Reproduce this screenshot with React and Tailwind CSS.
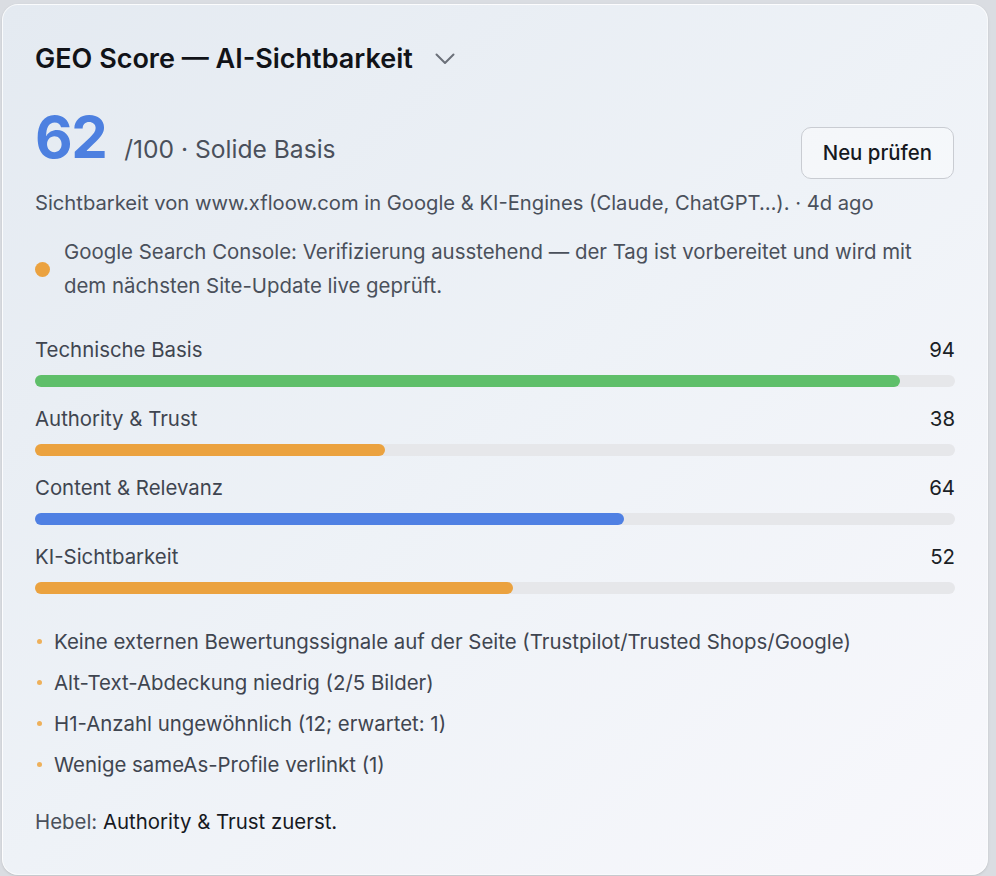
const pillars = [
  { label: 'Technische Basis', value: 94, color: 'bg-[#5fbf6a]' },
  { label: 'Authority & Trust', value: 38, color: 'bg-[#eba23f]' },
  { label: 'Content & Relevanz', value: 64, color: 'bg-[#4f80e3]' },
  { label: 'KI-Sichtbarkeit', value: 52, color: 'bg-[#eba23f]' },
]

const findings = [
  'Keine externen Bewertungssignale auf der Seite (Trustpilot/Trusted Shops/Google)',
  'Alt-Text-Abdeckung niedrig (2/5 Bilder)',
  'H1-Anzahl ungewöhnlich (12; erwartet: 1)',
  'Wenige sameAs-Profile verlinkt (1)',
]

function Chevron() {
  return (
    <svg width="20" height="12" viewBox="0 0 20 12" fill="none" className="text-[#6b7079]">
      <path d="M1.5 1.5 L10 10 L18.5 1.5" stroke="currentColor" strokeWidth="2" strokeLinecap="round" strokeLinejoin="round" />
    </svg>
  )
}

function PillarBar({ label, value, color }) {
  return (
    <div>
      <div className="flex items-center justify-between text-[20.4px] leading-[26px]">
        <span className="text-[#3f4550]">{label}</span>
        <span className="text-[#1b1f26]">{value}</span>
      </div>
      <div className="mt-[12px] h-[12px] w-full rounded-full bg-[#e6e7ea]">
        <div className={`h-full rounded-full ${color}`} style={{ width: `${value}%` }} />
      </div>
    </div>
  )
}

export default function App() {
  return (
    <div
      className="min-h-screen bg-[#dadde2] pl-[2px] pr-[8px] pt-[4px] pb-[4px]"
      style={{ fontFamily: 'Inter, "Noto Sans", sans-serif' }}
    >
      <div className="rounded-[16px] border border-white/70 bg-gradient-to-br from-[#e4eaf1] via-[#eef2f7] to-[#f8f8fc] px-[32px] pt-[37px] pb-[38px] shadow-sm">
        <div className="flex items-center gap-[22px]">
          <h2 className="text-[27px] font-semibold leading-[34px] text-[#111318]">
            GEO Score — AI-Sichtbarkeit
          </h2>
          <Chevron />
        </div>

        <div className="mt-[29px] flex items-start justify-between">
          <div className="flex items-baseline gap-[18px]">
            <span className="text-[58px] font-bold leading-[64px] tracking-[-1.5px] text-[#4d80e0]">62</span>
            <span className="text-[24.6px] text-[#4a505b]">/100 · Solide Basis</span>
          </div>
          <button className="mr-[1px] mt-[22px] h-[52px] rounded-[10px] border border-[#c9ccd2] bg-white/40 px-[21px] text-[20.4px] font-medium text-[#16191f]">
            Neu prüfen
          </button>
        </div>

        <p className="mt-[10px] text-[20.2px] leading-[28px] text-[#4a505b]">
          Sichtbarkeit von www.xfloow.com in Google &amp; KI-Engines (Claude, ChatGPT…). · 4d ago
        </p>

        <div className="mt-[18px] flex items-center gap-[14px]">
          <span className="h-[15px] w-[15px] shrink-0 rounded-full bg-[#eba23f]" />
          <p className="text-[20.4px] leading-[34px] text-[#4a505b]">
            Google Search Console: Verifizierung ausstehend — der Tag ist vorbereitet und wird mit dem nächsten
            Site-Update live geprüft.
          </p>
        </div>

        <div className="mt-[34px] flex flex-col gap-[19px]">
          {pillars.map((p) => (
            <PillarBar key={p.label} {...p} />
          ))}
        </div>

        <ul className="mt-[34px] flex flex-col gap-[14px]">
          {findings.map((f) => (
            <li key={f} className="flex items-center gap-[12px] text-[20.4px] leading-[27px] text-[#3f4550]">
              <span className="ml-[2px] h-[5px] w-[5px] shrink-0 rounded-full bg-[#eeb05a]" />
              {f}
            </li>
          ))}
        </ul>

        <p className="mt-[30px] text-[20.4px] leading-[28px] text-[#4a505b]">
          Hebel: <span className="text-[#16191f]">Authority &amp; Trust zuerst.</span>
        </p>
      </div>
    </div>
  )
}
